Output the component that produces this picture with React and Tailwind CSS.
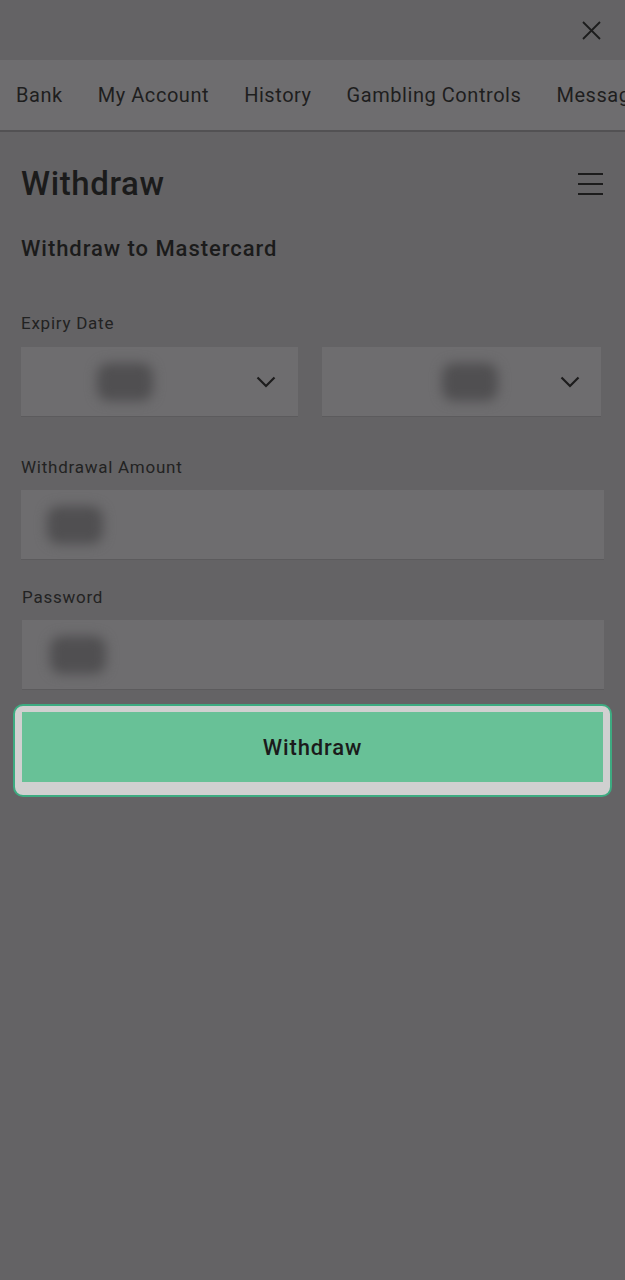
import React from 'react'

const tabs = ['Bank', 'My Account', 'History', 'Gambling Controls', 'Messages']

// blurred placeholder for the masked field values
const Masked = () => (
    <div className="h-[38px] w-[56px] rounded-[12px] bg-[#504f51] blur-[6px]" />
)

const Chevron = () => (
    <svg width="20" height="12" viewBox="0 0 20 12" fill="none" stroke="#1c1c1c" strokeWidth="2.2">
        <path d="M1.5 1.5 L10 10 L18.5 1.5" />
    </svg>
)

const Field = ({ children, className = '' }) => (
    <div className={`h-[70px] bg-[#6e6d6f] border-b border-[#5c5b5d] flex items-center ${className}`}>
        {children}
    </div>
)

const App = () => {
    return (
        <div className="min-h-[1280px] w-[625px] bg-[#646365] text-[#1b1b1b] font-['Roboto',sans-serif] overflow-hidden">
            {/* Top bar with close */}
            <div className="h-[60px] flex justify-end items-center pr-[24px]">
                <svg width="19" height="19" viewBox="0 0 19 19" stroke="#1c1c1c" strokeWidth="1.8">
                    <path d="M1 1 L18 18 M18 1 L1 18" />
                </svg>
            </div>

            {/* Account tabs */}
            <div className="h-[72px] bg-[#6e6d6f] border-b-2 border-[#525153] flex items-center gap-[35px] pl-[16px] whitespace-nowrap overflow-hidden">
                {tabs.map((t) => (
                    <span key={t} className="shrink-0 text-[20px] tracking-[0.55px] text-[#1e1e1e]">{t}</span>
                ))}
            </div>

            <div className="px-[21px]">
                <div className="flex items-center justify-between pt-[32px]">
                    <h1 className="text-[33px] font-medium leading-[40px] tracking-[0.6px]">Withdraw</h1>
                    <div className="flex flex-col gap-[8px] pr-[1px]">
                        <span className="block h-[2px] w-[25px] bg-[#1c1c1c]" />
                        <span className="block h-[2px] w-[25px] bg-[#1c1c1c]" />
                        <span className="block h-[2px] w-[25px] bg-[#1c1c1c]" />
                    </div>
                </div>

                <h2 className="mt-[30px] text-[22px] font-medium leading-[30px] tracking-[0.95px]">Withdraw to Mastercard</h2>

                <label className="block mt-[48px] text-[17px] leading-[22px] tracking-[0.75px] text-[#222]">Expiry Date</label>
                <div className="mt-[13px] flex gap-[24px]">
                    <Field className="w-[277px] pl-[76px] pr-[22px] justify-between">
                        <Masked />
                        <Chevron />
                    </Field>
                    <Field className="w-[279px] pl-[120px] pr-[21px] justify-between">
                        <Masked />
                        <Chevron />
                    </Field>
                </div>

                <label className="block mt-[39px] text-[17px] leading-[22px] tracking-[0.75px] text-[#222]">Withdrawal Amount</label>
                <Field className="mt-[12px] pl-[26px]">
                    <Masked />
                </Field>

                <label className="block mt-[26px] text-[17px] leading-[22px] tracking-[0.75px] text-[#222] pl-[1px]">Password</label>
                <Field className="mt-[12px] pl-[28px] ml-[1px]">
                    <Masked />
                </Field>
            </div>

            {/* Highlighted submit button */}
            <div className="mx-[13px] mt-[14px] rounded-[10px] border-[2px] border-[#3dab81] bg-[#d0d0d0] pt-[6px] px-[7px] pb-[13px]">
                <button className="w-full h-[70px] bg-[#68c197] text-[22px] font-medium text-[#1b1b1b] tracking-[0.9px]">
                    Withdraw
                </button>
            </div>
        </div>
    )
}

export default App
